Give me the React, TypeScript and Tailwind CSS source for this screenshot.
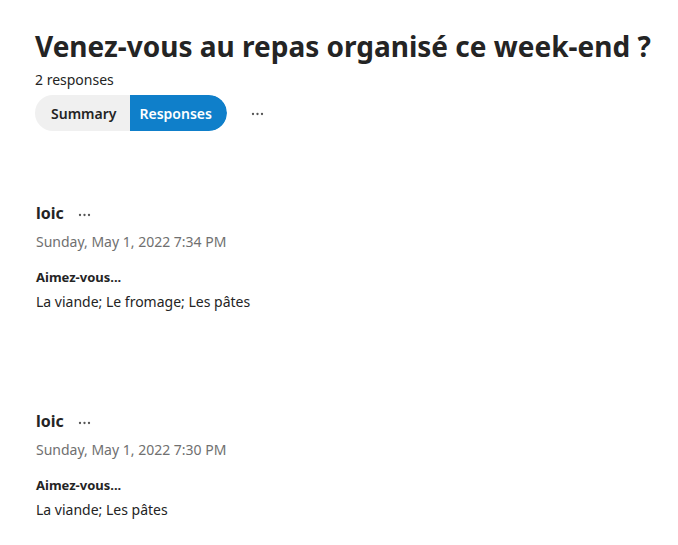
import React from 'react';

const responses = [
  { name: 'loic', date: 'Sunday, May 1, 2022 7:34 PM', question: 'Aimez-vous...', answer: 'La viande; Le fromage; Les pâtes' },
  { name: 'loic', date: 'Sunday, May 1, 2022 7:30 PM', question: 'Aimez-vous...', answer: 'La viande; Les pâtes' },
];

const Dots: React.FC<{ className?: string }> = ({ className = '' }) => (
  <svg width="13" height="4" viewBox="0 0 13 4" className={`fill-[#555555] ${className}`}>
    <circle cx="2" cy="2" r="1.15" />
    <circle cx="6.5" cy="2" r="1.15" />
    <circle cx="11" cy="2" r="1.15" />
  </svg>
);

export default function App() {
  return (
    <div className="min-h-screen bg-white text-[#242424] font-['Segoe_UI','Noto_Sans',sans-serif] pl-[35px] pt-[26px]">
      <h1 className="text-[28px] font-bold leading-[40px]">Venez-vous au repas organisé ce week-end ?</h1>
      <div className="text-[14px] leading-[20px] mt-[4px]">2 responses</div>

      <div className="flex items-center mt-[5px]">
        <div className="flex h-[36px] rounded-full overflow-hidden text-[14px] font-semibold">
          <button className="bg-[#f0f0f0] pl-[16px] pr-[14px] text-[#242424]">Summary</button>
          <button className="bg-[#0f7fca] pl-[9px] pr-[15px] text-white rounded-r-full">Responses</button>
        </div>
        <button className="ml-[20px] p-1">
          <Dots className="translate-y-[1px]" />
        </button>
      </div>

      <div className="flex flex-col gap-[97px] mt-[70px]">
        {responses.map((r, i) => (
          <div key={i} className="pl-[1px]">
            <div className="flex items-center gap-[14px]">
              <span className="text-[16px] font-bold leading-[24px]">{r.name}</span>
              <Dots className="translate-y-[2px]" />
            </div>
            <div className="text-[14px] text-[#707070] leading-[20px] mt-[7px]">{r.date}</div>
            <div className="text-[13px] font-bold leading-[18px] mt-[16px]">{r.question}</div>
            <div className="text-[14px] leading-[20px] mt-[6px]">{r.answer}</div>
          </div>
        ))}
      </div>
    </div>
  );
}
